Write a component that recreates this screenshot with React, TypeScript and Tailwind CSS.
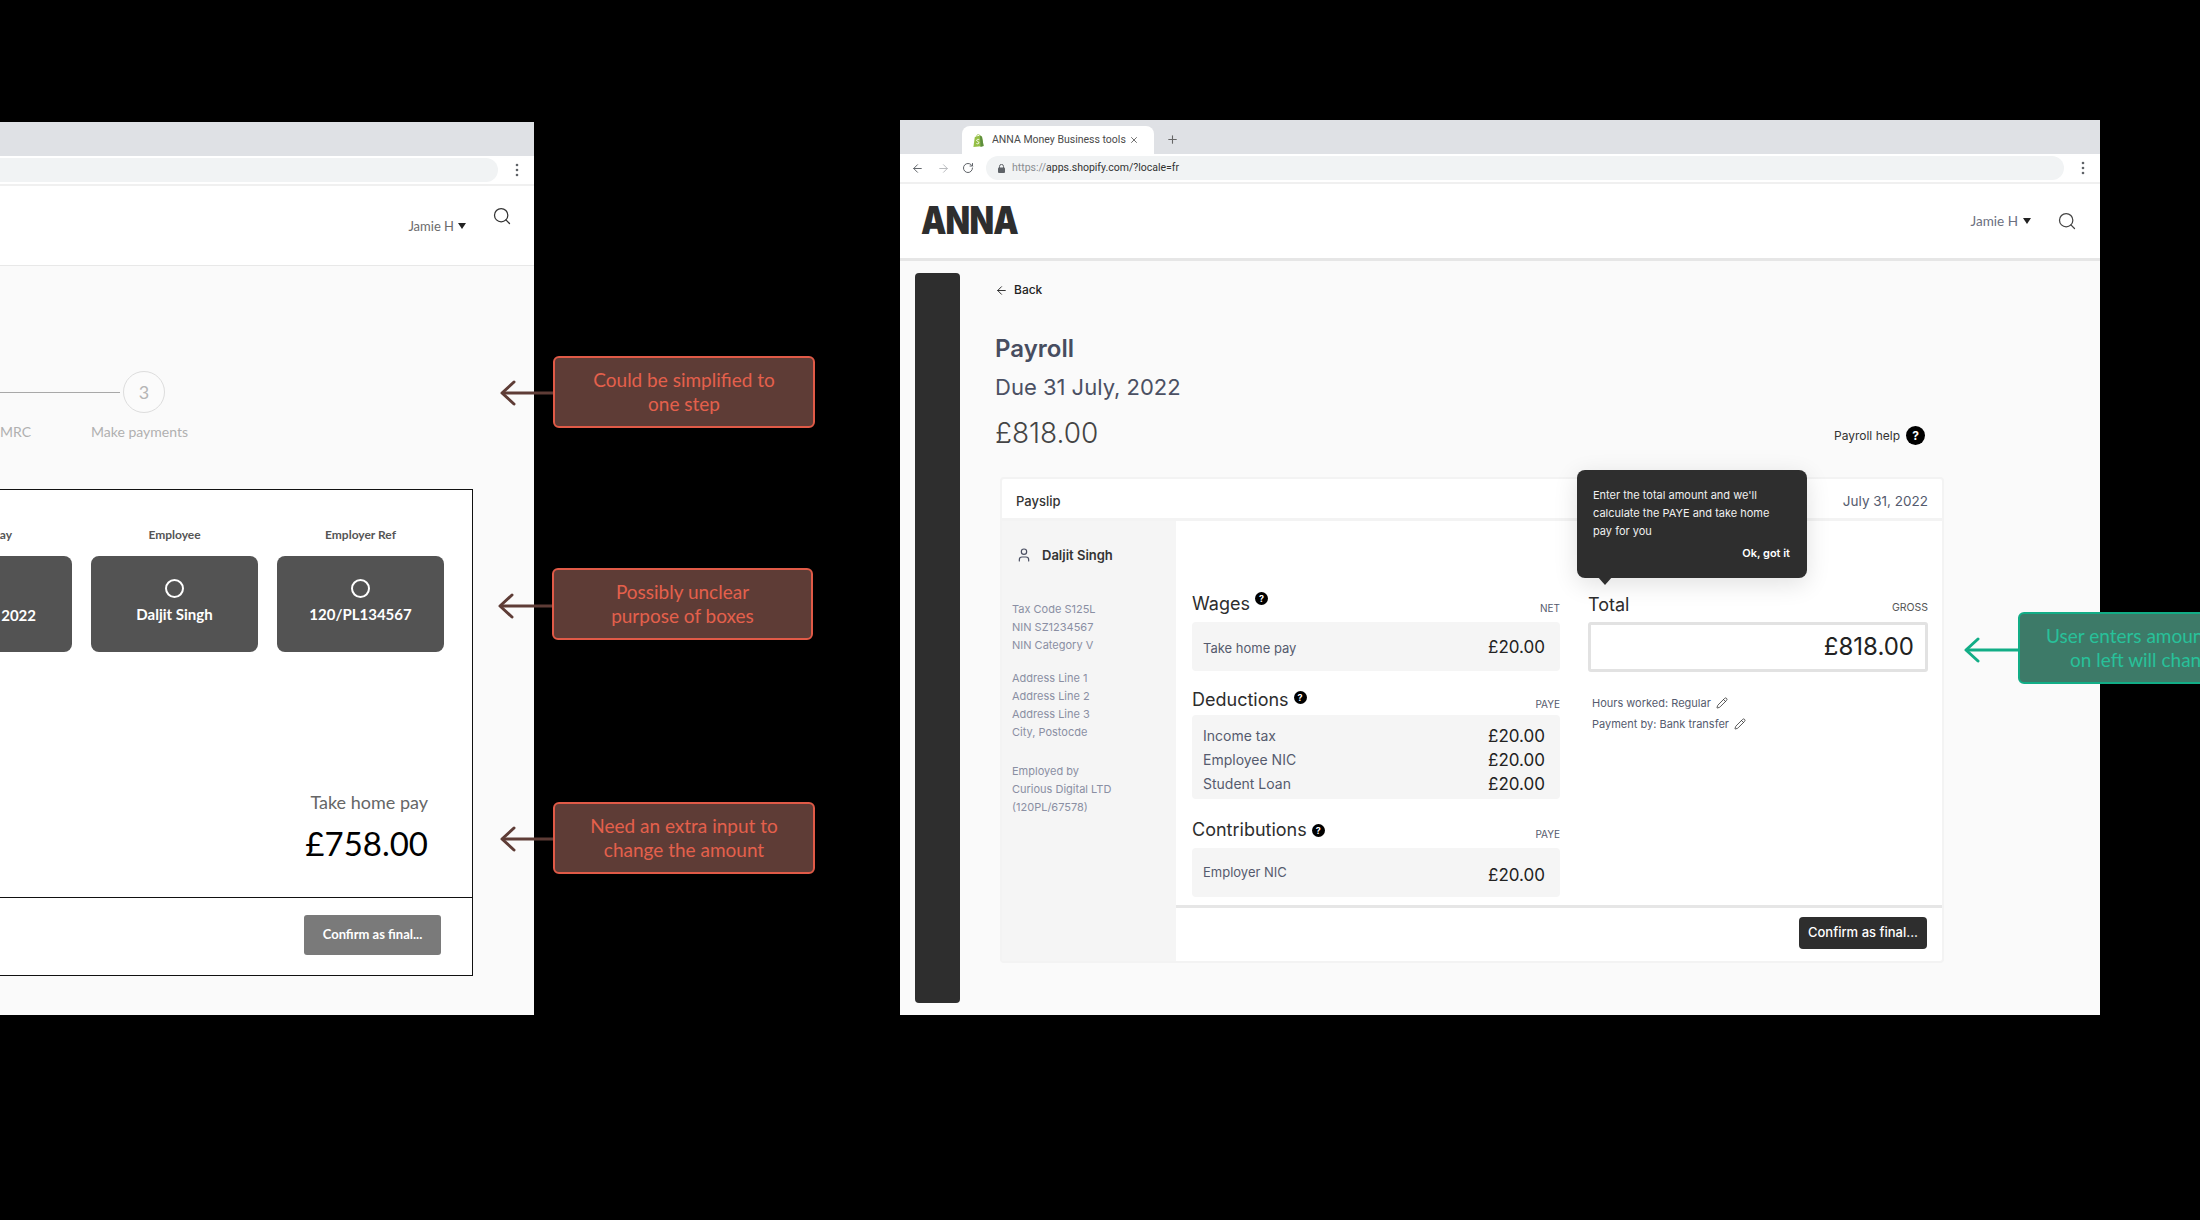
import { ArrowLeft, ArrowRight, Pencil, Plus, RotateCw, Search, User, X } from "lucide-react";

const Kebab = () => (
  <svg width="4" height="14" viewBox="0 0 4 14" className="fill-[#5f6368]">
    <circle cx="2" cy="2" r="1.3" />
    <circle cx="2" cy="7" r="1.3" />
    <circle cx="2" cy="12" r="1.3" />
  </svg>
);

const Caret = () => (
  <svg width="8" height="6" viewBox="0 0 8 6" className="fill-[#222222]">
    <path d="M0 0h8L4 6z" />
  </svg>
);

const NoteArrow = ({ color }: { color: string }) => (
  <svg width="56" height="26" viewBox="0 0 56 26" fill="none" stroke={color} strokeWidth="3">
    <path d="M56 13H3" />
    <path d="M15 2 3 13l12 11" strokeLinecap="round" strokeLinejoin="round" />
  </svg>
);

const Help = ({ className }: { className: string }) => (
  <span
    className={`flex h-[13px] w-[13px] shrink-0 items-center justify-center rounded-full bg-black text-[9px] font-bold leading-none text-white ${className}`}
  >
    ?
  </span>
);

const Amount = ({ className = "" }: { className?: string }) => (
  <span className={`text-[17px] leading-6 text-[#222222] ${className}`}>£20.00</span>
);

const LeftWindow = () => (
  <div className="absolute left-0 top-[122px] flex h-[893px] w-[534px] flex-col overflow-hidden bg-[#fafafa] font-['Lato',sans-serif]">
    <div className="h-[34px] shrink-0 bg-[#dfe1e5]" />
    <div className="flex h-[28px] shrink-0 items-center bg-white">
      <div className="h-[24px] w-[498px] rounded-r-full bg-[#f1f3f4]" />
      <div className="ml-[17px]">
        <Kebab />
      </div>
    </div>
    <div className="h-[2px] shrink-0 bg-[#f0f0f0]" />
    <div className="flex h-[80px] shrink-0 items-start justify-end border-b border-[#e8e8e8] bg-white pr-[22px]">
      <div className="mt-[32px] flex items-center gap-[4px] text-[13px] leading-4 text-[#6b6b6b]">
        Jamie H
        <Caret />
      </div>
      <Search className="ml-[26px] mt-[20px] h-[20px] w-[20px] text-[#333333]" strokeWidth={1.5} />
    </div>

    <div className="mt-[105px] flex items-center">
      <div className="h-px w-[120px] bg-[#a8a8a8]" />
      <div className="ml-[3px] flex h-[42px] w-[42px] items-center justify-center rounded-full border border-[#dddddd] bg-[#fbfbfb] text-[18px] text-[#b5b5b5]">
        3
      </div>
    </div>
    <div className="mt-[10px] flex text-[14px] leading-[18px] text-[#b0b0b0]">
      <span className="w-[27px] text-right">MRC</span>
      <span className="ml-[64px] whitespace-nowrap">Make payments</span>
    </div>

    <div className="ml-[-2px] mt-[48px] flex h-[487px] w-[475px] flex-col border border-[#111111] bg-white">
      <div className="flex gap-[19px] pt-[37px]">
        <div className="flex w-[73px] flex-col">
          <div className="h-4 pr-[60px] text-right text-[12px] font-bold leading-4 text-[#555555]">ay</div>
          <div className="mt-[13px] flex h-[96px] items-end justify-end rounded-r-lg bg-[#535353] pb-[28px] pr-[36px] text-[15px] font-bold leading-[18px] text-white">
            2022
          </div>
        </div>
        <div className="flex w-[167px] flex-col">
          <div className="h-4 text-center text-[12px] font-bold leading-4 text-[#555555]">Employee</div>
          <div className="mt-[13px] flex h-[96px] flex-col items-center rounded-lg bg-[#535353] pt-[23px] text-[15px] font-bold leading-[18px] text-white">
            <span className="h-[19px] w-[19px] rounded-full border-2 border-white" />
            <span className="mt-[7px]">Daljit Singh</span>
          </div>
        </div>
        <div className="flex w-[167px] flex-col">
          <div className="h-4 text-center text-[12px] font-bold leading-4 text-[#555555]">Employer Ref</div>
          <div className="mt-[13px] flex h-[96px] flex-col items-center rounded-lg bg-[#535353] pt-[23px] text-[15px] font-bold leading-[18px] text-white">
            <span className="h-[19px] w-[19px] rounded-full border-2 border-white" />
            <span className="mt-[7px]">120/PL134567</span>
          </div>
        </div>
      </div>
      <div className="mt-[138px] flex flex-1 flex-col items-end pr-[44px]">
        <span className="text-[18px] leading-6 text-[#666666]">Take home pay</span>
        <span className="mt-[9px] text-[33px] leading-10 text-black">£758.00</span>
      </div>
      <div className="flex h-[78px] justify-end border-t border-[#111111] pr-[31px] pt-[17px]">
        <div className="flex h-[40px] w-[137px] items-center justify-center rounded-[3px] bg-[#7a7a7a] text-[13px] font-bold text-white">
          Confirm as final...
        </div>
      </div>
    </div>
  </div>
);

const SectionHead = ({ title, tag, help }: { title: string; tag: string; help: string }) => (
  <div className="flex justify-between">
    <div className="flex items-start">
      <span className="text-[18px] leading-6 text-[#2d2d2d]">{title}</span>
      <Help className={help} />
    </div>
    <span className="mt-[8px] text-[10px] leading-4 text-[#555b6e]">{tag}</span>
  </div>
);

const RightWindow = () => (
  <div className="absolute left-[900px] top-[120px] flex h-[895px] w-[1200px] flex-col overflow-hidden bg-[#fafafa] font-['Inter',sans-serif]">
    <div className="flex h-[34px] shrink-0 items-end bg-[#dfe1e5] pl-[62px]">
      <div className="flex h-[28px] w-[192px] items-center rounded-t-lg bg-white pl-[11px]">
        <svg width="11" height="13" viewBox="0 0 11 13">
          <path d="M1.8 3 7 1.6 9 2.8 10.6 12 0.4 13z" fill="#95bf47" />
          <path d="M7 1.6 9 2.8 10.6 12 7.5 13z" fill="#5e8e3e" />
          <path d="M3.8 3V2.2C3.8 1 4.6.4 5.4.4S6.8 1 6.8 2.2" fill="none" stroke="#95bf47" strokeWidth=".8" />
          <path d="M6.2 5.6c-1.4-.6-2.8 0-2.5 1 .3.9 2.3.9 2.2 2.2-.1 1-1.4 1.3-2.5.7" fill="none" stroke="#fff" strokeWidth=".9" />
        </svg>
        <span className="ml-[8px] w-[132px] whitespace-nowrap font-['Roboto',sans-serif] text-[10.5px] leading-4 text-[#4a4a4a]">
          ANNA Money Business tools
        </span>
        <X className="ml-[5px] h-[10px] w-[10px] text-[#555555]" strokeWidth={2} />
      </div>
      <Plus className="mb-[8px] ml-[12px] h-[13px] w-[13px] text-[#666666]" strokeWidth={2} />
    </div>
    <div className="flex h-[28px] shrink-0 items-center bg-white">
      <ArrowLeft className="ml-[11px] h-[13px] w-[13px] text-[#5f6368]" strokeWidth={1.8} />
      <ArrowRight className="ml-[13px] h-[13px] w-[13px] text-[#b8babd]" strokeWidth={1.8} />
      <RotateCw className="ml-[12px] h-[12px] w-[12px] text-[#5f6368]" strokeWidth={2} />
      <div className="ml-[12px] flex h-[24px] w-[1078px] items-center rounded-full bg-[#f1f3f4] pl-[12px]">
        <svg width="7" height="9" viewBox="0 0 7 9" className="fill-[#5f6368]">
          <rect y="3.5" width="7" height="5.5" rx="1" />
          <path d="M1.5 4V2.4a2 2 0 0 1 4 0V4" fill="none" stroke="#5f6368" />
        </svg>
        <span className="ml-[7px] whitespace-nowrap font-['Roboto',sans-serif] text-[10.5px] leading-4 text-[#333333]">
          <span className="text-[#8a8d91]">https://</span>apps.shopify.com/?locale=fr
        </span>
      </div>
      <div className="ml-[17px]">
        <Kebab />
      </div>
    </div>
    <div className="h-[2px] shrink-0 bg-[#f0f0f0]" />
    <div className="flex h-[77px] shrink-0 items-start justify-between border-b-[3px] border-[#e6e6e6] bg-white pl-[21px] pr-[23px]">
      <span className="mt-[16px] origin-left scale-x-[.82] font-['Inter',sans-serif] text-[39px] font-black leading-[40px] tracking-tight text-[#2e2e2e]">
        ANNA
      </span>
      <div className="flex items-start">
        <div className="mt-[29px] flex items-center gap-[5px] font-['Lato',sans-serif] text-[13.5px] leading-4 text-[#6b7080]">
          Jamie H
          <Caret />
        </div>
        <Search className="ml-[26px] mt-[27px] h-[20px] w-[20px] text-[#444444]" strokeWidth={1.5} />
      </div>
    </div>

    <div className="flex flex-1">
      <div className="ml-[15px] mt-[12px] h-[730px] w-[45px] shrink-0 rounded bg-[#2e2e2e]" />
      <div className="flex-1 pl-[35px] pt-[21px]">
        <div className="flex h-4 items-center gap-[6px] text-[12px] font-medium text-[#222222]">
          <ArrowLeft className="h-[13px] w-[13px]" strokeWidth={1.7} />
          Back
        </div>
        <h1 className="mt-[35px] text-[24px] font-semibold leading-8 text-[#474d60]">Payroll</h1>
        <div className="mt-[7px] text-[22px] leading-[30px] text-[#4b5063]">Due 31 July, 2022</div>
        <div className="mt-[13px] flex w-[930px] items-start justify-between">
          <span className="text-[28px] font-light leading-9 text-[#444444]">£818.00</span>
          <div className="mt-[11px] flex items-center gap-[6px] text-[12px] text-[#333333]">
            Payroll help
            <span className="flex h-[19px] w-[19px] items-center justify-center rounded-full bg-black text-[12px] font-bold text-white">
              ?
            </span>
          </div>
        </div>

        <div className="ml-[5px] mt-[26px] flex h-[486px] w-[944px] flex-col rounded border-2 border-[#f3f3f3] bg-white">
          <div className="flex h-[42px] shrink-0 justify-between border-b-[3px] border-[#f3f3f3] pl-[14px] pr-[14px] pt-[13px]">
            <span className="text-[13px] font-medium leading-[18px] text-[#333333]">Payslip</span>
            <span className="text-[13.5px] leading-[18px] text-[#555b6e]">July 31, 2022</span>
          </div>
          <div className="flex flex-1">
            <div className="w-[174px] shrink-0 bg-[#f5f5f5] pl-[10px] pt-[24px] text-[11px] leading-[18px] text-[#8a8fa3]">
              <div className="flex h-5 items-center pl-[4px] text-[13px] font-semibold text-[#333333]">
                <User className="mr-[10px] h-[16px] w-[16px] text-[#4b5063]" strokeWidth={1.8} />
                Daljit Singh
              </div>
              <div className="mt-[35px]">
                <div>Tax Code S125L</div>
                <div>NIN SZ1234567</div>
                <div>NIN Category V</div>
              </div>
              <div className="mt-[15px]">
                <div>Address Line 1</div>
                <div>Address Line 2</div>
                <div>Address Line 3</div>
                <div>City, Postocde</div>
              </div>
              <div className="mt-[21px]">
                <div>Employed by</div>
                <div>Curious Digital LTD</div>
                <div>(120PL/67578)</div>
              </div>
            </div>

            <div className="flex flex-1 flex-col">
              <div className="flex h-[384px] shrink-0 gap-[28px] pl-[16px]">
                <div className="w-[368px] pt-[71px]">
                  <SectionHead title="Wages" tag="NET" help="ml-[5px]" />
                  <div className="mt-[6px] flex h-[49px] items-center justify-between rounded bg-[#f5f5f5] pl-[11px] pr-[15px] text-[13px] text-[#555b6e]">
                    <span className="mt-[4px]">Take home pay</span>
                    <Amount />
                  </div>
                  <div className="mt-[17px]">
                    <SectionHead title="Deductions" tag="PAYE" help="ml-[5px] mt-[3px]" />
                  </div>
                  <div className="mt-[3px] h-[84px] rounded bg-[#f5f5f5] pl-[11px] pr-[15px] pt-[9px] text-[14px] leading-6 text-[#555b6e]">
                    <div className="flex justify-between">
                      Income tax
                      <Amount />
                    </div>
                    <div className="flex justify-between">
                      Employee NIC
                      <Amount />
                    </div>
                    <div className="flex justify-between">
                      Student Loan
                      <Amount />
                    </div>
                  </div>
                  <div className="mt-[19px]">
                    <SectionHead title="Contributions" tag="PAYE" help="ml-[5px] mt-[6px]" />
                  </div>
                  <div className="mt-[6px] flex h-[49px] items-center justify-between rounded bg-[#f5f5f5] pl-[11px] pr-[15px] text-[13px] text-[#555b6e]">
                    Employer NIC
                    <Amount className="mt-[4px]" />
                  </div>
                </div>
                <div className="w-[340px] pt-[72px]">
                  <div className="flex justify-between">
                    <span className="text-[18px] leading-6 text-[#2d2d2d]">Total</span>
                    <span className="mt-[7px] text-[10.5px] leading-4 text-[#555555]">GROSS</span>
                  </div>
                  <div className="mt-[5px] flex h-[50px] items-center justify-end rounded-[3px] border-[3px] border-[#e2e2e2] bg-white pr-[11px] text-[24px] text-[#222222]">
                    £818.00
                  </div>
                  <div className="ml-[4px] mt-[22px] flex h-[18px] items-center gap-[5px] text-[11px] text-[#555b6e]">
                    Hours worked: Regular
                    <Pencil className="h-[12px] w-[12px] text-[#333333]" strokeWidth={1.6} />
                  </div>
                  <div className="ml-[4px] mt-[3px] flex h-[18px] items-center gap-[5px] text-[11px] text-[#555b6e]">
                    Payment by: Bank transfer
                    <Pencil className="h-[12px] w-[12px] text-[#333333]" strokeWidth={1.6} />
                  </div>
                </div>
              </div>
              <div className="flex flex-1 justify-end border-t-[3px] border-[#e6e6e6] pr-[15px] pt-[9px]">
                <div className="flex h-[32px] w-[128px] items-center justify-center rounded bg-[#2e2e2e] text-[13px] font-medium text-white">
                  Confirm as final...
                </div>
              </div>
            </div>
          </div>
        </div>
      </div>
    </div>

    {/* Tooltip over the payslip */}
    <div className="absolute left-[677px] top-[350px] h-[108px] w-[230px] rounded-lg bg-[#2e2e2e] pl-[16px] pr-[12px] pt-[16px] text-[11px] leading-[18px] text-[#f0f0f0] shadow-[0_6px_24px_rgba(0,0,0,0.12)]">
      <div>Enter the total amount and we'll</div>
      <div>calculate the PAYE and take home</div>
      <div>pay for you</div>
      <div className="mt-[4px] pr-[5px] text-right font-semibold text-white">Ok, got it</div>
      <span className="absolute left-[20px] top-[106px] h-0 w-0 border-x-[8px] border-t-[9px] border-x-transparent border-t-[#2e2e2e]" />
    </div>
  </div>
);

export default function App() {
  return (
    <div className="relative h-[1220px] w-[2200px] overflow-hidden bg-black">
      <LeftWindow />
      <RightWindow />

      {/* Review notes */}
      <div className="absolute left-[499px] top-[380px]">
        <NoteArrow color="#5e3c36" />
      </div>
      <div className="absolute left-[553px] top-[356px] flex h-[72px] w-[262px] items-center justify-center rounded-md border-2 border-[#e05a47] bg-[#5e3c36] text-center font-['Lato',sans-serif] text-[19px] leading-6 text-[#e4604c]">
        Could be simplified to
        <br />
        one step
      </div>
      <div className="absolute left-[497px] top-[593px]">
        <NoteArrow color="#5e3c36" />
      </div>
      <div className="absolute left-[552px] top-[568px] flex h-[72px] w-[261px] items-center justify-center rounded-md border-2 border-[#e05a47] bg-[#5e3c36] text-center font-['Lato',sans-serif] text-[19px] leading-6 text-[#e4604c]">
        Possibly unclear
        <br />
        purpose of boxes
      </div>
      <div className="absolute left-[499px] top-[826px]">
        <NoteArrow color="#5e3c36" />
      </div>
      <div className="absolute left-[553px] top-[802px] flex h-[72px] w-[262px] items-center justify-center rounded-md border-2 border-[#e05a47] bg-[#5e3c36] text-center font-['Lato',sans-serif] text-[19px] leading-6 text-[#e4604c]">
        Need an extra input to
        <br />
        change the amount
      </div>
      <div className="absolute left-[1963px] top-[637px]">
        <NoteArrow color="#12ad86" />
      </div>
      <div className="absolute left-[2018px] top-[612px] h-[72px] w-[260px] rounded-md border-2 border-[#12ad86] bg-[#3d7a68] pl-[26px] pt-[10px] font-['Lato',sans-serif] text-[19px] leading-6 text-[#28c19a]">
        <div className="whitespace-nowrap">User enters amount</div>
        <div className="ml-[24px] whitespace-nowrap">on left will change</div>
      </div>
    </div>
  );
}
